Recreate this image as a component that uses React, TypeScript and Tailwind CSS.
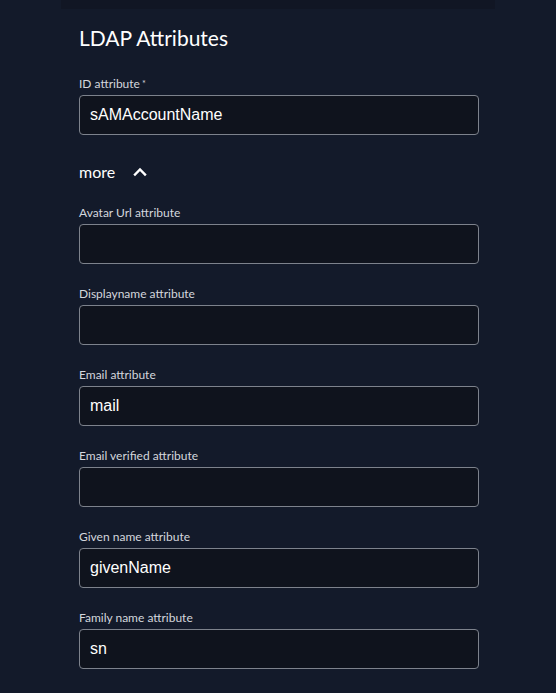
import React from 'react'

const fields: { label: string; value: string }[] = [
    { label: 'Avatar Url attribute', value: '' },
    { label: 'Displayname attribute', value: '' },
    { label: 'Email attribute', value: 'mail' },
    { label: 'Email verified attribute', value: '' },
    { label: 'Given name attribute', value: 'givenName' },
    { label: 'Family name attribute', value: 'sn' },
]

function Field({ label, value, required }: { label: string; value: string; required?: boolean }) {
    return (
        <div className="flex flex-col gap-[3px]">
            <label className="pt-px text-[12px] leading-4 text-[#d4d7dd]">
                {label}
                {required && <span className="ml-[2px] align-top text-[9px]">*</span>}
            </label>
            <input
                readOnly
                value={value}
                className="h-10 w-[400px] rounded-[4px] border border-[#7d828c] bg-[#0f131d] px-[10px] text-[16px] text-white outline-none font-['Liberation_Sans',Arial,sans-serif]"
            />
        </div>
    )
}

export default function App() {
    return (
        <main className="min-h-screen w-full bg-[#131a2a] font-['Lato','Noto_Sans',sans-serif]">
            <div className="mx-auto w-[434px]">
                <div className="h-[9px] bg-[#111624]" />
                <section className="pl-[18px] pt-[15px]">
                    <h2 className="text-[21px] leading-7 text-white">LDAP Attributes</h2>
                    <div className="mt-[23px]">
                        <Field label="ID attribute" value="sAMAccountName" required />
                    </div>
                    <button type="button" className="mt-[25px] flex h-6 items-center gap-[18px] text-[16px] text-white">
                        more
                        <svg width="14" height="10" viewBox="0 0 14 10" fill="none">
                            <path d="M2 7.5 L7 2.5 L12 7.5" stroke="white" strokeWidth="2.4" strokeLinecap="square" />
                        </svg>
                    </button>
                    <div className="mt-5 flex flex-col gap-[21px]">
                        {fields.map((f) => (
                            <Field key={f.label} label={f.label} value={f.value} />
                        ))}
                    </div>
                </section>
            </div>
        </main>
    )
}
